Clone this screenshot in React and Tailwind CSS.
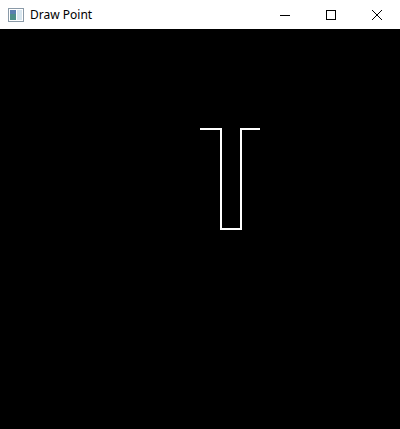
export default function App() {
  return (
    <div className="w-[400px] h-[429px] flex flex-col bg-black overflow-hidden" style={{ fontFamily: '"Segoe UI", "Noto Sans", "Liberation Sans", sans-serif' }}>
      <div className="h-[29px] bg-white flex items-center shrink-0">
        <div className="w-[30px] flex items-center justify-center pl-[1px]">
          <svg width="16" height="14" viewBox="0 0 16 14">
            <rect x="0.5" y="0.5" width="15" height="13" fill="#fff" stroke="#8a9aa8" />
            <rect x="2" y="2" width="6" height="10" fill="#4d8f8a" />
            <rect x="2" y="2" width="6" height="4" fill="#5a7fb0" />
            <rect x="9" y="2" width="5" height="10" fill="#d8e6ef" />
          </svg>
        </div>
        <div className="text-[12px] text-black flex-1 leading-none">Draw Point</div>
        <div className="flex h-full">
          <div className="w-[46px] h-full flex items-center justify-center">
            <svg width="10" height="10" viewBox="0 0 10 10"><line x1="0" y1="5.5" x2="10" y2="5.5" stroke="#000" strokeWidth="1" /></svg>
          </div>
          <div className="w-[46px] h-full flex items-center justify-center">
            <svg width="10" height="10" viewBox="0 0 10 10"><rect x="0.5" y="0.5" width="9" height="9" fill="none" stroke="#000" strokeWidth="1" /></svg>
          </div>
          <div className="w-[46px] h-full flex items-center justify-center">
            <svg width="10" height="10" viewBox="0 0 10 10"><path d="M0 0 L10 10 M10 0 L0 10" stroke="#000" strokeWidth="1" /></svg>
          </div>
        </div>
      </div>
      <div className="flex-1 bg-black">
        <svg width="400" height="400" viewBox="0 0 400 400">
          <polyline points="200,100 221,100 221,200 241,200 241,100 260,100" fill="none" stroke="#fff" strokeWidth="2" strokeLinejoin="miter" />
        </svg>
      </div>
    </div>
  );
}
